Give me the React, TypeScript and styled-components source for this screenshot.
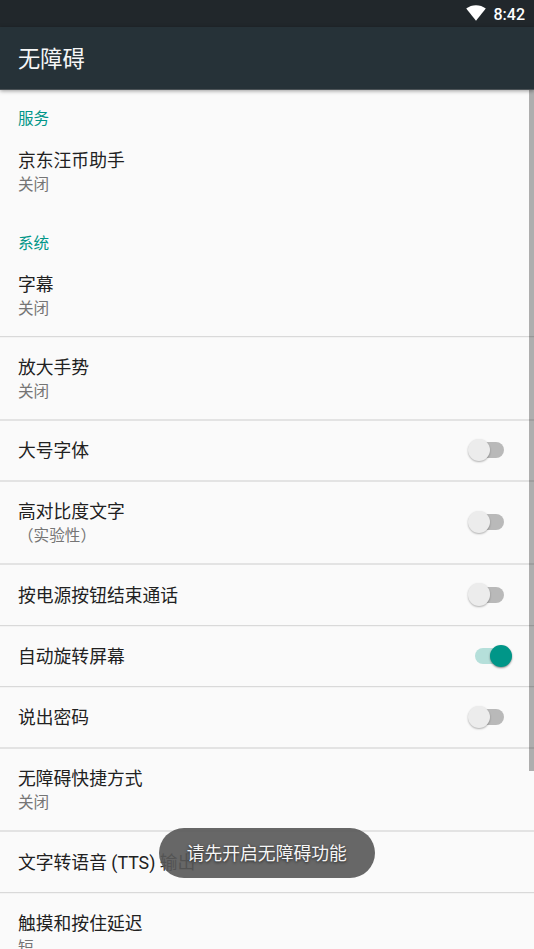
import React from 'react';
import styled, { createGlobalStyle } from 'styled-components';

const GlobalStyle = createGlobalStyle`
  * { box-sizing: border-box; }
  body {
    margin: 0;
    background: #fafafa;
    font-family: Roboto, "Noto Sans CJK SC", sans-serif;
    overflow: hidden;
  }
`;

const Screen = styled.div`
  position: relative;
  width: 534px;
  height: 949px;
  overflow: hidden;
  background: #fafafa;
  display: flex;
  flex-direction: column;
`;

const StatusBar = styled.header`
  height: 27px;
  flex: none;
  display: flex;
  justify-content: flex-end;
  align-items: center;
  gap: 8px;
  padding: 2px 9px 0 0;
  background: #21272b;
  color: #fff;
`;

const WifiIcon = styled.svg`
  width: 20px;
  height: 16px;
  margin-top: -3px;
  display: block;
`;

const Clock = styled.time`
  font-size: 16px;
  font-weight: 500;
  line-height: 20px;
`;

const AppBar = styled.div`
  position: relative;
  height: 63px;
  flex: none;
  display: flex;
  align-items: center;
  padding: 1px 0 0 18px;
  background: #263238;
  border-bottom: 1px solid #4b5256;
  box-shadow: 0 1px 4px rgba(0, 0, 0, 0.38);
`;

const PageTitle = styled.h1`
  margin: 0;
  font-size: 22.25px;
  font-weight: 400;
  line-height: 32px;
  color: #f6f7f7;
`;

const List = styled.main`
  flex: 1;
  min-height: 0;
  overflow: hidden;
`;

const SectionTitle = styled.h2<{ $height: number }>`
  height: ${(p) => p.$height}px;
  margin: 0;
  padding: ${(p) => p.$height - 22}px 0 0 18px;
  font-size: 15.6px;
  font-weight: 400;
  line-height: 22px;
  color: #009688;
`;

const Row = styled.div<{ $height: number }>`
  height: ${(p) => p.$height}px;
  display: flex;
  align-items: center;
  justify-content: space-between;
  padding: 0 30px 0 18px;
`;

const Divider = styled.div<{ $soft: boolean }>`
  height: 2px;
  background: ${(p) =>
    p.$soft
      ? '#e3e3e3'
      : 'linear-gradient(#d9d9d9 0 1px, #f3f3f3 1px 2px)'};
`;

const Labels = styled.div`
  display: flex;
  flex-direction: column;
`;

const Label = styled.span`
  font-size: 17.8px;
  line-height: 25px;
  color: #212121;
  white-space: nowrap;
`;

const Summary = styled.span`
  margin-bottom: -1px;
  padding-top: 1px;
  font-size: 15.6px;
  line-height: 22px;
  color: #757575;
  white-space: nowrap;
`;

const Track = styled.span<{ $on: boolean }>`
  width: 29px;
  height: 16px;
  margin-bottom: 1px;
  border-radius: 8px;
  background: ${(p) => (p.$on ? '#b5dfda' : '#b9b9b9')};
  display: flex;
  align-items: center;
  justify-content: ${(p) => (p.$on ? 'flex-end' : 'flex-start')};
`;

const Thumb = styled.span<{ $on: boolean }>`
  width: 22.5px;
  height: 22.5px;
  flex: none;
  margin: ${(p) => (p.$on ? '0 -8px 0 0' : '0 0 0 -7.5px')};
  border-radius: 50%;
  background: ${(p) => (p.$on ? '#009688' : '#ececec')};
  box-shadow: 0 1px 2px rgba(0, 0, 0, ${(p) => (p.$on ? 0.45 : 0.3)});
`;

const ScrollThumb = styled.div`
  position: absolute;
  top: 90px;
  right: 0;
  width: 5px;
  height: 681px;
  background: rgba(0, 0, 0, 0.3);
`;

const Toast = styled.div`
  position: absolute;
  left: 159px;
  top: 828px;
  width: 215.5px;
  height: 50px;
  display: flex;
  align-items: center;
  justify-content: center;
  padding-top: 1px;
  border-radius: 25px;
  background: rgba(88, 88, 88, 0.91);
  color: #f5f5f5;
  font-size: 17.8px;
  line-height: 26px;
  text-shadow: 0 1px 3px rgba(0, 0, 0, 0.7);
  white-space: nowrap;
`;

interface Setting {
  label: string;
  summary?: string;
  on?: boolean;
  height: number;
  softLine?: boolean;
}

const services: Setting[] = [{ label: '京东汪币助手', summary: '关闭', height: 83 }];

const system: Setting[] = [
  { label: '字幕', summary: '关闭', height: 81 },
  { label: '放大手势', summary: '关闭', height: 81, softLine: true },
  { label: '大号字体', on: false, height: 59, softLine: true },
  { label: '高对比度文字', summary: '（实验性）', on: false, height: 81, softLine: true },
  { label: '按电源按钮结束通话', on: false, height: 60 },
  { label: '自动旋转屏幕', on: true, height: 59 },
  { label: '说出密码', on: false, height: 59, softLine: true },
  { label: '无障碍快捷方式', summary: '关闭', height: 81, softLine: true },
  { label: '文字转语音 (TTS) 输出', height: 60 },
  { label: '触摸和按住延迟', summary: '短', height: 81 },
];

function SettingRow({ item }: { item: Setting }) {
  return (
    <Row $height={item.height}>
      <Labels>
        <Label>{item.label}</Label>
        {item.summary && <Summary>{item.summary}</Summary>}
      </Labels>
      {item.on !== undefined && (
        <Track $on={item.on} role="switch" aria-checked={item.on}>
          <Thumb $on={item.on} />
        </Track>
      )}
    </Row>
  );
}

export default function App() {
  return (
    <>
      <GlobalStyle />
      <Screen>
        <StatusBar>
          <WifiIcon viewBox="0 0 20 16">
            <path d="M0.2 3.6C3 1.4 6.4 0.2 10 0.2s7 1.2 9.8 3.4L10 15.8z" fill="#fff" />
          </WifiIcon>
          <Clock>8:42</Clock>
        </StatusBar>
        <AppBar>
          <PageTitle>无障碍</PageTitle>
        </AppBar>
        <List>
          <SectionTitle $height={40}>服务</SectionTitle>
          {services.map((s) => (
            <SettingRow key={s.label} item={s} />
          ))}
          <SectionTitle $height={42}>系统</SectionTitle>
          {system.map((s) => (
            <React.Fragment key={s.label}>
              <SettingRow item={s} />
              <Divider $soft={!!s.softLine} />
            </React.Fragment>
          ))}
        </List>
        <ScrollThumb />
        <Toast>请先开启无障碍功能</Toast>
      </Screen>
    </>
  );
}
